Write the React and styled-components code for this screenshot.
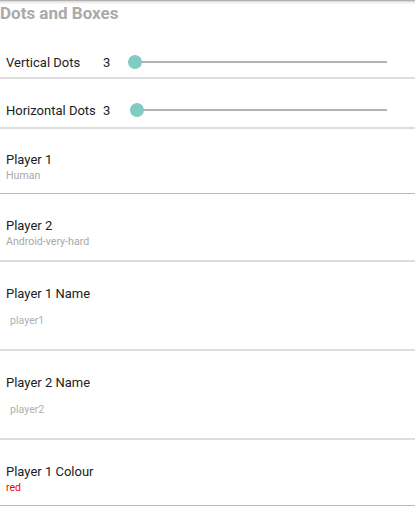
import React from 'react'
import styled, { createGlobalStyle } from 'styled-components'

const GlobalStyle = createGlobalStyle`
  body {
    margin: 0;
    background: #fff;
    font-family: Roboto, "Noto Sans", sans-serif;
  }
`;

const SPage = styled.div`
  width: 415px;
  background: #fff;
`;

const SHeader = styled.header`
  height: 29px;
  box-sizing: border-box;
  padding-top: 2px;
  background: linear-gradient(to bottom, #8a8a8a 0px, #d8d8d8 1px, #f4f4f4 3px, #fff 5px);
`;

const STitle = styled.h1`
  margin: 0;
  font-size: 17px;
  line-height: 22px;
  font-weight: bold;
  color: #aaaaaa;
`;

const SRow = styled.div`
  box-sizing: border-box;
  border-bottom: ${p => (p.$dark ? '1px solid #b8b8b8' : '2px solid #dddddd')};
`;

const SSliderRow = styled(SRow)`
  height: 50px;
  padding: ${p => p.$pad};
  display: flex;
  align-items: center;
`;

const SSliderLabel = styled.span`
  flex: 0 0 97px;
  padding-left: 6px;
  font-size: 13px;
  color: #212121;
`;

const SValue = styled.span`
  width: 8px;
  font-size: 13px;
  color: #212121;
`;

const STrack = styled.div`
  flex: 1;
  margin: 0 28px 0 ${p => p.$offset}px;
  height: 2px;
  background: #b3b3b3;
  position: relative;
`;

const SThumb = styled.div`
  position: absolute;
  left: 0;
  top: -6px;
  width: 14px;
  height: 14px;
  border-radius: 50%;
  background: #80cbc4;
`;

const SItem = styled(SRow)`
  padding: ${p => p.$pad};
  display: flex;
  flex-direction: column;
`;

const SItemTitle = styled.div`
  font-size: 13px;
  line-height: 18px;
  color: #212121;
`;

const SItemSub = styled.div`
  font-size: 10.6px;
  line-height: 14px;
  color: ${p => p.$color || '#a8a8a8'};
`;

const SInput = styled.div`
  margin-top: 11px;
  padding-left: 4px;
  font-size: 10.6px;
  line-height: 14px;
  color: #b0b0b0;
`;

function SliderRow({ label, value, pad, offset }) {
  return (
    <SSliderRow $pad={pad}>
      <SSliderLabel>{label}</SSliderLabel>
      <SValue>{value}</SValue>
      <STrack $offset={offset}>
        <SThumb />
      </STrack>
    </SSliderRow>
  )
}

function App() {
  return (
    <SPage>
      <GlobalStyle />
      <SHeader>
        <STitle>Dots and Boxes</STitle>
      </SHeader>
      <SliderRow label="Vertical Dots" value="3" pad="18px 0 0" offset={17} />
      <SliderRow label="Horizontal Dots" value="3" pad="14px 0 0" offset={19} />
      <SItem $dark $pad="22px 6px 10px">
        <SItemTitle>Player 1</SItemTitle>
        <SItemSub>Human</SItemSub>
      </SItem>
      <SItem $pad="23px 6px 11px">
        <SItemTitle>Player 2</SItemTitle>
        <SItemSub>Android-very-hard</SItemSub>
      </SItem>
      <SItem $pad="23px 6px 21px">
        <SItemTitle>Player 1 Name</SItemTitle>
        <SInput>player1</SInput>
      </SItem>
      <SItem $pad="23px 6px 21px">
        <SItemTitle>Player 2 Name</SItemTitle>
        <SInput>player2</SInput>
      </SItem>
      <SItem $dark $pad="23px 6px 10px">
        <SItemTitle>Player 1 Colour</SItemTitle>
        <SItemSub $color="#ff0000">red</SItemSub>
      </SItem>
    </SPage>
  )
}

export default App
